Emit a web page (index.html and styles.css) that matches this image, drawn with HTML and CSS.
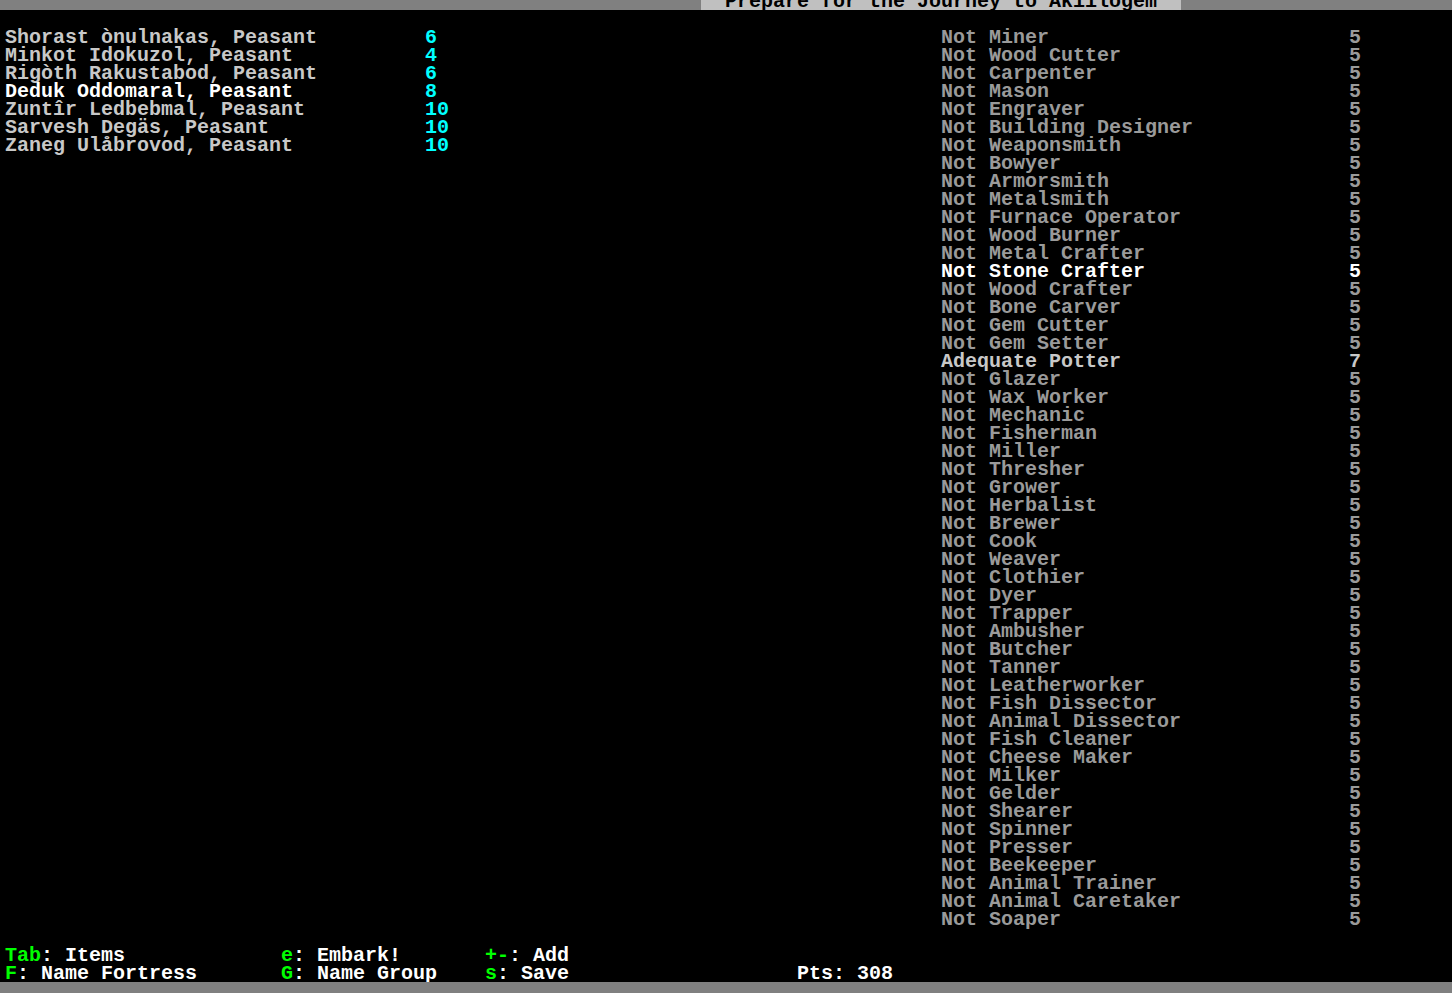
FILE: index.html
```html
<!DOCTYPE html>
<html>
<head>
<meta charset="utf-8">
<link rel="stylesheet" href="styles.css">
</head>
<body>
<div class="topbar"><div class="title"><span class="title-text">Prepare for the Journey to Akiilogem</span></div></div>
<div class="main">
  <div class="left">
    <div class="row"><span class="name lt">Shorast ònulnakas, Peasant</span><span class="cy">6</span></div>
    <div class="row"><span class="name lt">Minkot Idokuzol, Peasant</span><span class="cy">4</span></div>
    <div class="row"><span class="name lt">Rigòth Rakustabod, Peasant</span><span class="cy">6</span></div>
    <div class="row"><span class="name wh">Deduk Oddomaral, Peasant</span><span class="cy">8</span></div>
    <div class="row"><span class="name lt">Zuntîr Ledbebmal, Peasant</span><span class="cy">10</span></div>
    <div class="row"><span class="name lt">Sarvesh Degäs, Peasant</span><span class="cy">10</span></div>
    <div class="row"><span class="name lt">Zaneg Ulåbrovod, Peasant</span><span class="cy">10</span></div>
  </div>
  <div class="right">
    <div class="row dk"><span class="skill">Not Miner</span><span>5</span></div>
    <div class="row dk"><span class="skill">Not Wood Cutter</span><span>5</span></div>
    <div class="row dk"><span class="skill">Not Carpenter</span><span>5</span></div>
    <div class="row dk"><span class="skill">Not Mason</span><span>5</span></div>
    <div class="row dk"><span class="skill">Not Engraver</span><span>5</span></div>
    <div class="row dk"><span class="skill">Not Building Designer</span><span>5</span></div>
    <div class="row dk"><span class="skill">Not Weaponsmith</span><span>5</span></div>
    <div class="row dk"><span class="skill">Not Bowyer</span><span>5</span></div>
    <div class="row dk"><span class="skill">Not Armorsmith</span><span>5</span></div>
    <div class="row dk"><span class="skill">Not Metalsmith</span><span>5</span></div>
    <div class="row dk"><span class="skill">Not Furnace Operator</span><span>5</span></div>
    <div class="row dk"><span class="skill">Not Wood Burner</span><span>5</span></div>
    <div class="row dk"><span class="skill">Not Metal Crafter</span><span>5</span></div>
    <div class="row wh"><span class="skill">Not Stone Crafter</span><span>5</span></div>
    <div class="row dk"><span class="skill">Not Wood Crafter</span><span>5</span></div>
    <div class="row dk"><span class="skill">Not Bone Carver</span><span>5</span></div>
    <div class="row dk"><span class="skill">Not Gem Cutter</span><span>5</span></div>
    <div class="row dk"><span class="skill">Not Gem Setter</span><span>5</span></div>
    <div class="row lt"><span class="skill">Adequate Potter</span><span>7</span></div>
    <div class="row dk"><span class="skill">Not Glazer</span><span>5</span></div>
    <div class="row dk"><span class="skill">Not Wax Worker</span><span>5</span></div>
    <div class="row dk"><span class="skill">Not Mechanic</span><span>5</span></div>
    <div class="row dk"><span class="skill">Not Fisherman</span><span>5</span></div>
    <div class="row dk"><span class="skill">Not Miller</span><span>5</span></div>
    <div class="row dk"><span class="skill">Not Thresher</span><span>5</span></div>
    <div class="row dk"><span class="skill">Not Grower</span><span>5</span></div>
    <div class="row dk"><span class="skill">Not Herbalist</span><span>5</span></div>
    <div class="row dk"><span class="skill">Not Brewer</span><span>5</span></div>
    <div class="row dk"><span class="skill">Not Cook</span><span>5</span></div>
    <div class="row dk"><span class="skill">Not Weaver</span><span>5</span></div>
    <div class="row dk"><span class="skill">Not Clothier</span><span>5</span></div>
    <div class="row dk"><span class="skill">Not Dyer</span><span>5</span></div>
    <div class="row dk"><span class="skill">Not Trapper</span><span>5</span></div>
    <div class="row dk"><span class="skill">Not Ambusher</span><span>5</span></div>
    <div class="row dk"><span class="skill">Not Butcher</span><span>5</span></div>
    <div class="row dk"><span class="skill">Not Tanner</span><span>5</span></div>
    <div class="row dk"><span class="skill">Not Leatherworker</span><span>5</span></div>
    <div class="row dk"><span class="skill">Not Fish Dissector</span><span>5</span></div>
    <div class="row dk"><span class="skill">Not Animal Dissector</span><span>5</span></div>
    <div class="row dk"><span class="skill">Not Fish Cleaner</span><span>5</span></div>
    <div class="row dk"><span class="skill">Not Cheese Maker</span><span>5</span></div>
    <div class="row dk"><span class="skill">Not Milker</span><span>5</span></div>
    <div class="row dk"><span class="skill">Not Gelder</span><span>5</span></div>
    <div class="row dk"><span class="skill">Not Shearer</span><span>5</span></div>
    <div class="row dk"><span class="skill">Not Spinner</span><span>5</span></div>
    <div class="row dk"><span class="skill">Not Presser</span><span>5</span></div>
    <div class="row dk"><span class="skill">Not Beekeeper</span><span>5</span></div>
    <div class="row dk"><span class="skill">Not Animal Trainer</span><span>5</span></div>
    <div class="row dk"><span class="skill">Not Animal Caretaker</span><span>5</span></div>
    <div class="row dk"><span class="skill">Not Soaper</span><span>5</span></div>
  </div>
</div>
<div class="footer">
  <span><span class="key">Tab</span>: Items</span>
  <span><span class="key">e</span>: Embark!</span>
  <span><span class="key">+-</span>: Add</span>
  <span></span>
  <span><span class="key">F</span>: Name Fortress</span>
  <span><span class="key">G</span>: Name Group</span>
  <span><span class="key">s</span>: Save</span>
  <span>Pts: 308</span>
</div>
<div class="bottombar"></div>
</body>
</html>
```
FILE: styles.css
```css
html, body {
  margin: 0;
  padding: 0;
  background: #000;
}
body {
  height: 993px;
  overflow: hidden;
  display: flex;
  flex-direction: column;
  font-family: "Liberation Mono", "DejaVu Sans Mono", monospace;
  font-weight: bold;
  font-size: 20px;
  line-height: 18px;
  color: #c8c8c8;
}
.topbar {
  height: 10px;
  flex: none;
  background: #808080;
  padding-left: 701px;
  overflow: hidden;
}
.title {
  width: 480px;
  height: 10px;
  box-sizing: border-box;
  padding-left: 24px;
  background: #c0c0c0;
  color: #000;
  overflow: hidden;
  white-space: nowrap;
}
.title-text {
  display: block;
  margin-top: -7px;
  height: 18px;
}
.main {
  flex: 1;
  display: flex;
  padding: 19px 0 0 5px;
  min-height: 0;
}
.left {
  width: 936px;
  flex: none;
}
.right {
  flex: 1;
}
.row {
  display: flex;
  height: 18px;
  white-space: nowrap;
}
.name {
  width: 420px;
  flex: none;
}
.skill {
  width: 408px;
  flex: none;
}
.lt { color: #c8c8c8; }
.wh { color: #ffffff; }
.dk { color: #9a9a9a; }
.cy { color: #00ffff; }
.footer {
  flex: none;
  height: 36px;
  box-sizing: border-box;
  padding: 1px 0 0 5px;
  display: grid;
  grid-template-columns: 276px 204px 312px 1fr;
  grid-auto-rows: 18px;
  color: #ffffff;
  white-space: nowrap;
}
.key { color: #00ff00; }
.bottombar {
  flex: none;
  height: 11px;
  background: #808080;
}
```
